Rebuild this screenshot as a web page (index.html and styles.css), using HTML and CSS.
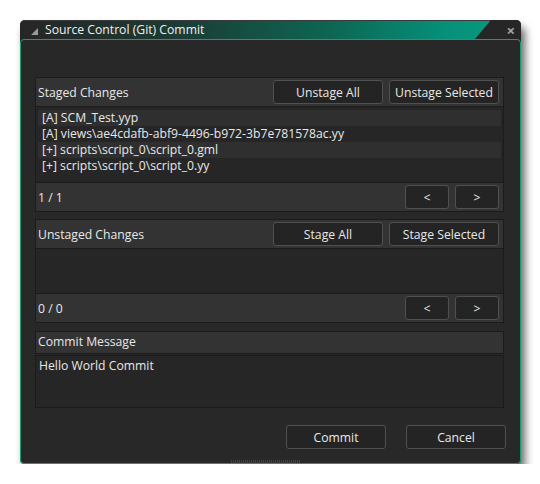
FILE: index.html
```html
<!DOCTYPE html>
<html>
<head>
<meta charset="utf-8">
<link rel="stylesheet" href="styles.css">
</head>
<body>
<div class="window">
  <div class="titlebar">
    <span class="tri"></span>
    <span class="title">Source Control (Git) Commit</span>
    <span class="notch"><span class="close">×</span></span>
  </div>
  <div class="content">
    <div class="section">
      <div class="header">
        <span class="label">Staged Changes</span>
        <div class="btns">
          <button class="btn">Unstage All</button>
          <button class="btn">Unstage Selected</button>
        </div>
      </div>
      <div class="list staged">
        <div class="row odd">[A] SCM_Test.yyp</div>
        <div class="row">[A] views\ae4cdafb-abf9-4496-b972-3b7e781578ac.yy</div>
        <div class="row odd">[+] scripts\script_0\script_0.gml</div>
        <div class="row">[+] scripts\script_0\script_0.yy</div>
      </div>
      <div class="pager">
        <span class="label">1 / 1</span>
        <div class="btns">
          <button class="btn nav">&lt;</button>
          <button class="btn nav">&gt;</button>
        </div>
      </div>
    </div>
    <div class="section">
      <div class="header">
        <span class="label">Unstaged Changes</span>
        <div class="btns">
          <button class="btn">Stage All</button>
          <button class="btn">Stage Selected</button>
        </div>
      </div>
      <div class="list unstaged"></div>
      <div class="pager">
        <span class="label">0 / 0</span>
        <div class="btns">
          <button class="btn nav">&lt;</button>
          <button class="btn nav">&gt;</button>
        </div>
      </div>
    </div>
    <div class="section msg">
      <div class="mheader">Commit Message</div>
      <div class="mtext">Hello World Commit</div>
    </div>
    <div class="footer">
      <button class="btn big">Commit</button>
      <button class="btn big">Cancel</button>
    </div>
    <div class="grip"></div>
  </div>
</div>
</body>
</html>
```
FILE: styles.css
```css
* { box-sizing: border-box; }
body {
  margin: 0;
  background: #ffffff;
  font-family: "Open Sans", "Noto Sans", sans-serif;
  font-size: 12.2px;
  color: #e6e6e6;
}
.window {
  margin: 20px 0 0 20px;
  width: 501px;
  height: 444px;
  border-radius: 5px;
  background: #262626;
  box-shadow: 4px 7px 9px rgba(0,0,0,0.6);
  display: flex;
  flex-direction: column;
  position: relative;
}
.titlebar {
  height: 19px;
  border-radius: 5px 5px 0 0;
  background: linear-gradient(to right, #262626 0%, #1c3a34 30%, #0d6652 62%, #06907a 85%, #0a9c80 100%);
  display: flex;
  align-items: center;
  position: relative;
  border-top: 1px solid #3a3a3a;
}
.tri {
  width: 0; height: 0;
  margin-left: 11px;
  border-left: 7px solid transparent;
  border-bottom: 7px solid #9a9a9a;
  margin-top: 2px;
}
.title {
  margin-left: 7px;
  color: #f0f0f0;
  font-size: 12.2px;
  line-height: 18px;
}
.notch {
  position: absolute;
  right: 0; top: -1px;
  width: 46px; height: 19px;
  background: #262626;
  clip-path: polygon(16px 0, 100% 0, 100% 100%, 0 100%);
  border-top-right-radius: 5px;
}
.close {
  position: absolute;
  right: 6px; top: 1px;
  font-size: 15px;
  font-weight: bold;
  line-height: 18px;
  color: #a0a4a8;
}
.content {
  flex: 1;
  border: 1px solid #1a9e6c;
  border-radius: 4px;
  background: #282828;
  padding: 37px 16px 0 14px;
  display: flex;
  flex-direction: column;
  position: relative;
}
.section {
  display: flex;
  flex-direction: column;
  margin-bottom: 7px;
}
.header, .pager {
  height: 30px;
  background: #333333;
  border: 1px solid #1b1b1b;
  display: flex;
  align-items: center;
  justify-content: space-between;
  padding: 0 4px 0 2px;
}
.label { color: #e8e8e8; }
.btns { display: flex; gap: 6px; }
.btn {
  font-family: inherit;
  font-size: 12.2px;
  color: #e8e8e8;
  background: #242424;
  border: 1px solid #505050;
  border-radius: 3px;
  height: 24px;
  width: 110px;
  padding: 0;
}
.btn.nav { width: 44px; }
.list {
  background: #262626;
  border-left: 1px solid #1b1b1b;
  border-right: 1px solid #1b1b1b;
  padding: 3px 2px 0 2px;
}
.staged { height: 75px; }
.unstaged { height: 44px; }
.row {
  height: 16px;
  line-height: 16px;
  padding-left: 4px;
  color: #e8e8e8;
  white-space: nowrap;
}
.row.odd { background: #2f2f2f; }
.msg { margin-top: 1px; }
.mheader {
  height: 23px;
  background: #333333;
  border: 1px solid #1b1b1b;
  padding-left: 2px;
  line-height: 20px;
}
.mtext {
  margin-top: 1px;
  height: 53px;
  background: #262626;
  border: 1px solid #1b1b1b;
  padding: 2px 3px;
  line-height: 16px;
}
.footer {
  margin-top: 10px;
  display: flex;
  justify-content: flex-end;
  gap: 20px;
  margin-right: -2px;
}
.btn.big { width: 100px; height: 24px; }
.grip {
  position: absolute;
  left: 210px; bottom: 0;
  width: 70px; height: 3px;
  background: repeating-linear-gradient(to right, #444 0 1px, transparent 1px 2px);
}
```
